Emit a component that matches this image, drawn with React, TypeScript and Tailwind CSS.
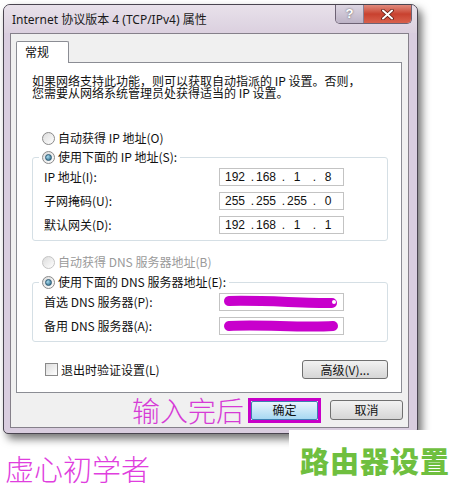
import React from 'react';

const CJK = "font-['Noto_Sans_CJK_SC',sans-serif]";

function Radio({ checked, disabled }: { checked?: boolean; disabled?: boolean }) {
  return (
    <span
      className={`w-[13px] h-[13px] shrink-0 rounded-full border flex items-center justify-center bg-linear-to-br from-[#dcdcdc] to-white ${
        disabled ? 'border-[#c4c4c4]' : 'border-[#8a8a8a]'
      }`}
    >
      {checked && (
        <span className="w-[7px] h-[7px] rounded-full border border-[#2c5a74] bg-[radial-gradient(circle_at_35%_35%,#a8dcf0,#215c7c)]" />
      )}
    </span>
  );
}

function IpField({ parts }: { parts: string[] }) {
  return (
    <div className="w-[125px] h-[18px] border border-[#c3c3c3] bg-white flex items-center pl-[3px] text-[12px] leading-none text-[#111] font-['Liberation_Sans',sans-serif]">
      {parts.map((p, i) => (
        <React.Fragment key={i}>
          <span className="w-[24px] text-center">{p}</span>
          {i < 3 && <span className="w-[7px] text-right">.</span>}
        </React.Fragment>
      ))}
    </div>
  );
}

function Scribble({ wobble }: { wobble?: boolean }) {
  return (
    <div className="w-[125px] h-[18px] border border-[#c3c3c3] bg-white">
      <svg width="123" height="16" viewBox="0 0 123 16">
        <path
          d={wobble ? 'M9 8 C 40 6, 80 10, 113 8' : 'M9 7 C 40 6, 80 9, 112 9'}
          stroke="#c800cc"
          strokeWidth="10"
          strokeLinecap="round"
          fill="none"
        />
        {!wobble && <circle cx="114" cy="8" r="2" fill="#fff" />}
      </svg>
    </div>
  );
}

function Row({ label, children }: { label: string; children: React.ReactNode }) {
  return (
    <div className="flex items-center pl-[11px]">
      <span className="w-[175px] text-[12px] leading-[16px]">{label}</span>
      {children}
    </div>
  );
}

export default function App() {
  return (
    <div className={`w-[461px] h-[490px] bg-white relative overflow-hidden text-[#111] ${CJK}`}>
      {/* dialog window */}
      <div className="ml-[3px] mt-[4px] w-[415px] h-[430px] rounded-t-[7px] rounded-b-[5px] border border-[#4a4550] bg-[#d9cddf] shadow-[4px_5px_9px_rgba(0,0,0,0.55)] flex flex-col">
        {/* title bar */}
        <div className="h-[28px] flex items-start justify-between rounded-t-[6px] bg-linear-to-b from-[#e8e1ea] to-[#dbd0df]">
          <span className="pl-[8px] pt-[7px] text-[12px] leading-[16px] font-['Noto_Sans','Noto_Sans_CJK_SC',sans-serif] text-[#1a1a1a]">
            Internet 协议版本 4 (TCP/IPv4) 属性
          </span>
          <div className="mr-[5px] flex h-[19px] rounded-b-[5px] border border-t-0 border-[#6d6274] overflow-hidden">
            <div className="w-[28px] flex items-center justify-center bg-linear-to-b from-[#ddd6e2] to-[#bdb3c6] border-r border-[#8a7f92] text-white text-[13px] font-bold font-['Liberation_Sans',sans-serif] [text-shadow:0_0_2px_#555]">
              ?
            </div>
            <div className="w-[47px] flex items-center justify-center bg-linear-to-b from-[#e08a7c] via-[#c8412f] to-[#d9604c]">
              <svg width="13" height="11" viewBox="0 0 13 11">
                <path d="M2 1.5 L11 9.5 M11 1.5 L2 9.5" stroke="#5a1a12" strokeWidth="3.6" strokeLinecap="round" />
                <path d="M2 1.5 L11 9.5 M11 1.5 L2 9.5" stroke="#fff" strokeWidth="2" strokeLinecap="round" />
              </svg>
            </div>
          </div>
        </div>

        {/* client area */}
        <div className="ml-[6px] w-[399px] h-[395px] border border-[#85808a] bg-[#f0f0f0] flex flex-col">
          {/* tab */}
          <div className="mt-[7px] ml-[5px] w-[53px] h-[22px] -mb-px relative z-10 border border-b-0 border-[#8b8d94] bg-white text-[12px] leading-[20px] pl-[8px] rounded-t-[2px]">
            常规
          </div>
          {/* tab panel */}
          <div className="ml-[5px] w-[386px] h-[331px] border border-[#8b8d94] bg-white flex flex-col text-[12px]">
            <div className="mt-[12px] ml-[15px] flex flex-col leading-[12px] whitespace-nowrap">
              <span className="h-[12px] leading-[12px]">如果网络支持此功能，则可以获取自动指派的 IP 设置。否则，</span>
              <span className="h-[12px] leading-[12px]">您需要从网络系统管理员处获得适当的 IP 设置。</span>
            </div>

            <label className="mt-[31px] ml-[25px] flex items-center gap-[3px] h-[16px] leading-[16px]">
              <Radio />
              <span>自动获得 IP 地址(O)</span>
            </label>

            <fieldset className="mt-[3px] ml-[15px] w-[356px] border border-[#d5dfe5] rounded-[3px] pb-[6px] flex flex-col gap-[6px]">
              <legend className="ml-[6px] px-[3px] flex items-center gap-[3px] h-[16px] leading-[16px]">
                <Radio checked />
                <span>使用下面的 IP 地址(S):</span>
              </legend>
              <div className="mt-[-3px]" />
              <Row label="IP 地址(I):">
                <IpField parts={['192', '168', '1', '8']} />
              </Row>
              <Row label="子网掩码(U):">
                <IpField parts={['255', '255', '255', '0']} />
              </Row>
              <Row label="默认网关(D):">
                <IpField parts={['192', '168', '1', '1']} />
              </Row>
            </fieldset>

            <label className="mt-[13px] ml-[25px] flex items-center gap-[3px] h-[16px] leading-[16px] text-[#9a9a9a]">
              <Radio disabled />
              <span>自动获得 DNS 服务器地址(B)</span>
            </label>

            <fieldset className="mt-[4px] ml-[15px] w-[356px] border border-[#d5dfe5] rounded-[3px] pb-[6px] flex flex-col gap-[6px]">
              <legend className="ml-[6px] px-[3px] flex items-center gap-[3px] h-[16px] leading-[16px]">
                <Radio checked />
                <span>使用下面的 DNS 服务器地址(E):</span>
              </legend>
              <div className="mt-[-3px]" />
              <Row label="首选 DNS 服务器(P):">
                <Scribble />
              </Row>
              <Row label="备用 DNS 服务器(A):">
                <Scribble wobble />
              </Row>
            </fieldset>

            <div className="mt-[18px] pl-[28px] pr-[13px] flex items-center justify-between">
              <label className="flex items-center gap-[3px] leading-[16px]">
                <span className="w-[13px] h-[13px] border border-[#8a8a8a] bg-linear-to-br from-[#dcdcdc] to-white" />
                <span>退出时验证设置(L)</span>
              </label>
              <button className="w-[86px] h-[19px] rounded-[3px] border border-[#707070] bg-linear-to-b from-[#f2f2f2] to-[#d6d6d6] text-[12px] leading-none">
                高级(V)...
              </button>
            </div>
          </div>

          {/* bottom buttons */}
          <div className="flex-1 flex items-center justify-end pr-[5px] gap-[9px]">
            <span className="mr-[-5px] text-[28px] leading-none font-light text-[#d63ad6]">输入完后</span>
            <div className="w-[73px] h-[25px] border-[3px] border-[#c800c8] flex">
              <button className="flex-1 border border-[#3c7fb1] rounded-[2px] bg-linear-to-b from-[#e9f5fc] to-[#a7d8f2] text-[12px] leading-none">
                确定
              </button>
            </div>
            <button className="w-[73px] h-[20px] rounded-[3px] border border-[#707070] bg-linear-to-b from-[#f2f2f2] to-[#d6d6d6] text-[12px] leading-none">
              取消
            </button>
          </div>
        </div>
      </div>

      {/* annotation below the window */}
      <div className="mt-[16px] ml-[5px] text-[29px] leading-[36px] font-light text-[#e03ede]">虚心初学者</div>

      {/* watermark over the window corner */}
      <div className="absolute left-[289px] top-[430px] w-[172px] h-[60px] bg-white flex items-start pl-[11px] pt-[13px]">
        <span className="text-[29px] leading-[34px] font-black tracking-[1px] text-[#6fbf3f]">路由器设置</span>
      </div>
    </div>
  );
}
